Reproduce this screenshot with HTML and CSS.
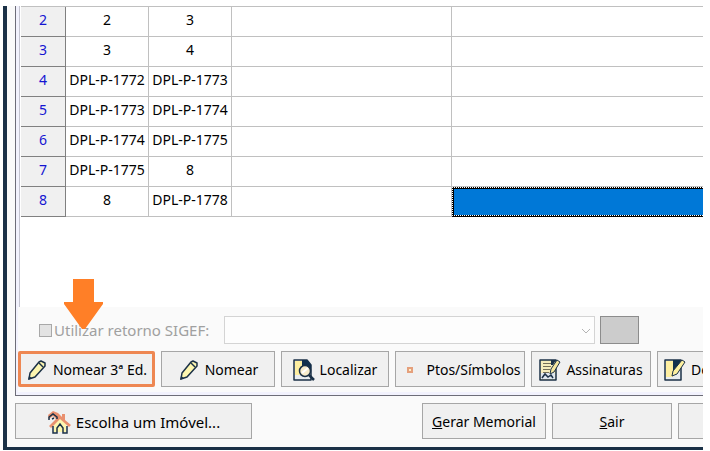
FILE: index.html
```
<!DOCTYPE html>
<html lang="pt-BR">
<head>
    <meta charset="UTF-8">
    <meta name="viewport" content="width=device-width, initial-scale=1.0">
    <title>Memorial</title>
    <link rel="stylesheet" href="styles.css">
</head>
<body>
    <!-- Ícones usados mais de uma vez -->
    <svg class="sprite" aria-hidden="true">
        <symbol id="pencil" viewBox="0 0 20 22">
            <path d="M2 20l1-6 9-11 2-1 4 2v3L8 18z" fill="#fdf6b0" stroke="#1b3147" stroke-width="1.5" stroke-linejoin="round"/>
            <path d="M12 4l4 4" stroke="#1b3147" stroke-width="1.5"/>
            <path d="M1 21l1-4 3 2z" fill="#1b3147"/>
        </symbol>
    </svg>

    <div class="window">
        <div class="panel">
            <div class="grid">
                <table>
                    <colgroup>
                        <col class="col-number">
                        <col class="col-point">
                        <col class="col-point">
                        <col class="col-name">
                        <col>
                    </colgroup>
                    <tbody>
                        <tr><th scope="row">2</th><td>2</td><td>3</td><td></td><td></td></tr>
                        <tr><th scope="row">3</th><td>3</td><td>4</td><td></td><td></td></tr>
                        <tr><th scope="row">4</th><td>DPL-P-1772</td><td>DPL-P-1773</td><td></td><td></td></tr>
                        <tr><th scope="row">5</th><td>DPL-P-1773</td><td>DPL-P-1774</td><td></td><td></td></tr>
                        <tr><th scope="row">6</th><td>DPL-P-1774</td><td>DPL-P-1775</td><td></td><td></td></tr>
                        <tr><th scope="row">7</th><td>DPL-P-1775</td><td>8</td><td></td><td></td></tr>
                        <tr><th scope="row">8</th><td>8</td><td>DPL-P-1778</td><td></td><td class="selected"><div class="focus"></div></td></tr>
                    </tbody>
                </table>
            </div>

            <div class="controls">
                <div class="sigef">
                    <label class="check"><input type="checkbox" disabled>Utilizar retorno SIGEF:</label>
                    <div class="combo">
                        <select aria-label="Retorno SIGEF" disabled><option></option></select>
                        <svg class="chevron" viewBox="0 0 10 6"><path d="M1 1l4 4 4-4" fill="none" stroke="#b4b4b4"/></svg>
                    </div>
                    <button class="browse" type="button" aria-label="Procurar" disabled></button>
                    <svg class="arrow" viewBox="0 0 39 50"><path d="M9 0h21v23h9v2L21 50h-3L0 25v-2h9z" fill="#ff7f27"/></svg>
                </div>

                <div class="actions">
                    <button class="btn highlight" type="button"><svg class="icon"><use href="#pencil"/></svg>Nomear 3ª Ed.</button>
                    <button class="btn small" type="button"><svg class="icon"><use href="#pencil"/></svg>Nomear</button>
                    <button class="btn find" type="button">
                        <svg class="icon" viewBox="0 0 22 22">
                            <path d="M1 1h13l4 5v15H1z" fill="#e9edf0" stroke="#1b3147" stroke-width="1.5" stroke-linejoin="round"/>
                            <path d="M2 2h7v14H2z" fill="#fdeea0"/>
                            <path d="M9 1h5l4 5v8H9z" fill="#12304d"/>
                            <circle cx="12" cy="12" r="5.5" fill="#f7eccb" stroke="#1b3147" stroke-width="1.5"/>
                            <path d="M9 14l6-5" stroke="#fff" stroke-width="2"/>
                            <path d="M16 16l5 5" stroke="#1b3147" stroke-width="2.5"/>
                        </svg>Localizar</button>
                    <button class="btn symbols" type="button">
                        <svg class="icon" viewBox="0 0 22 22"><path d="M9 9h4v4H9z" fill="#fff0c8" stroke="#e5a07c" stroke-width="2"/></svg>Ptos/Símbolos</button>
                    <button class="btn sign" type="button">
                        <svg class="icon" viewBox="0 0 22 22">
                            <path d="M1 1h16v20H1z" fill="#f5edbb" stroke="#1b3147" stroke-width="1.5" stroke-linejoin="round"/>
                            <path d="M2 14h14v6H2z" fill="#dfe7ee"/>
                            <path d="M4 4.500h8M4 7.500h8M4 10.500h7M4 13.500h6" stroke="#746f58"/>
                            <path d="M3 19l3-4 3 3 3-2 2 3" fill="none" stroke="#1b3147" stroke-width="1.500"/>
                            <path d="M11 15l1-5 6-9 3 2-6 10z" fill="#f5e7a0" stroke="#1b3147"/>
                            <path d="M12 1h5l-3 5h-2z" fill="#1b3147"/>
                        </svg>Assinaturas</button>
                    <button class="btn last" type="button">
                        <svg class="icon" viewBox="0 0 22 22">
                            <path d="M1 1h16v20H1z" fill="#e9edf0" stroke="#1b3147" stroke-width="1.5" stroke-linejoin="round"/>
                            <path d="M2 2h7v16H2z" fill="#fdeea0"/>
                            <path d="M9 1h7v5l-5 6H9z" fill="#12304d"/>
                            <path d="M8 17l1-5 9-11 3 2-8 12z" fill="#fdf0a0" stroke="#1b3147"/>
                        </svg>De</button>
                </div>
            </div>
        </div>

        <div class="footer">
            <button class="btn property" type="button">
                <svg class="icon house" viewBox="0 0 24 24">
                    <path d="M7 13l6-5 6 5v9H7z" fill="#fdf6b0"/>
                    <path d="M1 5l5-4 5 2 4 4V4h3v6l6 5-2 2-9-8-9 9-2-2 7-7-3-3-4 3z" fill="#e9906f"/>
                    <path d="M2 10V7l4-3 4 3v2M5 9l2-1" fill="none" stroke="#1b3147" stroke-width="1.5"/>
                    <path d="M6 16v7h4v-5l3-4 3 4v5h4v-7" fill="none" stroke="#1b3147" stroke-width="1.5"/>
                </svg>Escolha um Imóvel...</button>
            <button class="btn report" type="button"><span><u>G</u>erar Memorial</span></button>
            <button class="btn exit" type="button"><span><u>S</u>air</span></button>
            <button class="btn last" type="button" aria-label="Ajuda"></button>
        </div>
    </div>
</body>
</html>
```
FILE: styles.css
```
* {
    box-sizing: border-box;
}
body {
    margin: 0;
    padding: 6px 7px 2px 3px;
    background: #fff;
    color: #000;
    font-family: Tahoma, "Noto Sans", "DejaVu Sans Condensed", sans-serif;
    font-size: 14px;
    line-height: 20px;
}
.sprite {
    display: none;
}
.window {
    border-left: 4px solid #1b3147;
    border-bottom: 3px solid #1b3147;
    background: #fafafa;
    padding: 0 0 8px 8px;
    overflow: hidden;
}
.panel {
    border-left: 1px solid #6d6d78;
    border-bottom: 1px solid #6d6d78;
    background: #f2f2fd;
    padding: 0 0 3px 2px;
}

/* Tabela de pontos */
.grid {
    margin-left: 1px;
    padding: 0 0 90px 1px;
    border-left: 1px solid #c4c4d0;
    background: #fff;
}
table {
    width: 100%;
    table-layout: fixed;
    border-collapse: separate;
    border-spacing: 0;
    border-top: 1px solid #c0c0c0;
}
.col-number {
    width: 45px;
}
.col-point {
    width: 83px;
}
.col-name {
    width: 220px;
}
th, td {
    height: 30px;
    padding: 0 0 4px;
    text-align: center;
    font-weight: normal;
    white-space: nowrap;
    border-right: 1px solid #c0c0c0;
    border-bottom: 1px solid #c0c0c0;
}
td:last-child {
    border-right: 0;
}
th {
    background: #f0f0f0;
    color: #1414d2;
    border-right-color: #808080;
    border-bottom-color: #808080;
}
.selected {
    padding: 0;
    background: #000;
    border-bottom: 1px solid #000;
}
.focus {
    height: 29px;
    border: 1px dotted #fff;
    border-right: 0;
    background: #0078d7;
    background-clip: padding-box;
    box-shadow: inset 1px 1px 0 #000;
}

/* Controles */
.controls {
    background: #fafafa;
    padding: 9px 0 5px;
}
.sigef {
    position: relative;
    display: flex;
    align-items: center;
    height: 28px;
    padding-left: 21px;
}
.check {
    display: flex;
    align-items: center;
    gap: 2px;
    width: 185px;
    color: #a0a0a0;
    font-size: 15px;
    white-space: nowrap;
}
.check input {
    appearance: none;
    flex: none;
    width: 13px;
    height: 13px;
    margin: 0;
    border: 1px solid #a8a8a8;
    background: #e3e3e3;
}
.combo {
    position: relative;
    width: 371px;
    height: 28px;
    margin-right: 5px;
}
.combo select {
    appearance: none;
    width: 100%;
    height: 100%;
    border: 1px solid #c4c4c4;
    border-radius: 0;
    background: #fff;
}
.chevron {
    position: absolute;
    top: 12px;
    right: 4px;
    width: 10px;
    height: 6px;
}
.browse {
    width: 39px;
    height: 28px;
    border: 1px solid #8c8c8c;
    background: #ccc;
}
.arrow {
    position: absolute;
    left: 46px;
    bottom: 15px;
    width: 39px;
    height: 50px;
}
.actions, .footer {
    display: flex;
    gap: 6px;
    padding-top: 7px;
}
.btn {
    display: flex;
    flex: none;
    align-items: center;
    justify-content: center;
    gap: 5px;
    height: 36px;
    padding: 1px 0 0;
    border: 1px solid #a6a6a6;
    background: #f0f0f0;
    color: #000;
    font: inherit;
    white-space: nowrap;
    overflow: hidden;
}
.icon {
    flex: none;
    width: 22px;
    height: 22px;
}
.house {
    width: 24px;
    height: 24px;
}
.highlight {
    width: 137px;
    border: 3px solid #ee8752;
    border-radius: 2px;
}
.small {
    width: 114px;
}
.find {
    width: 108px;
}
.symbols {
    width: 130px;
}
.sign {
    width: 120px;
}
.property {
    width: 237px;
    font-size: 15px;
}
.report {
    width: 124px;
    margin-left: 164px;
}
.exit {
    width: 120px;
}
.last {
    flex: 1;
    justify-content: flex-start;
    padding-left: 6px;
    border-right: 0;
}
```
